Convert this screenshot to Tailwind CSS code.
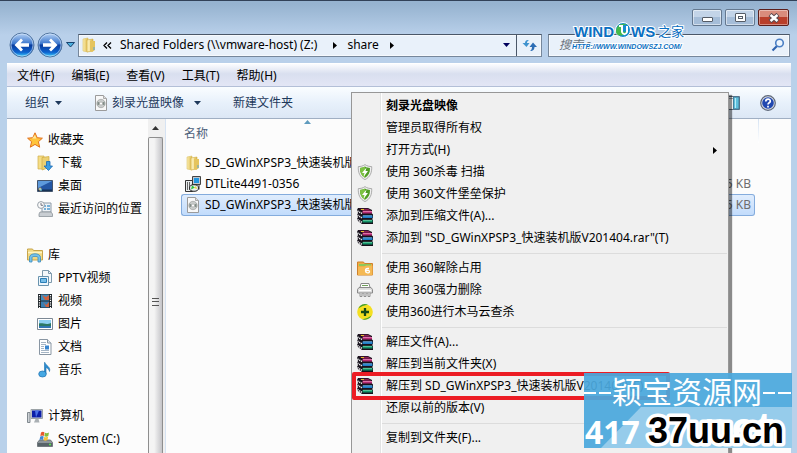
<!DOCTYPE html>
<html lang="zh-CN">
<head>
  <meta charset="UTF-8" />
  <meta name="viewport" content="width=device-width, initial-scale=1.0" />
  <title>share</title>
  <script src="https://cdn.jsdelivr.net/npm/@tailwindcss/browser@4"></script>
</head>

<body class="relative flex h-screen flex-col overflow-hidden border-t border-slate-700 bg-[#b9d1ea] font-['Noto_Sans','Noto_Sans_CJK_SC',sans-serif] text-xs text-black">

  <!-- Shared icons -->
  <svg class="absolute size-0">
    <defs>
      <linearGradient id="gold" x1="0" x2="1"><stop offset="0" stop-color="#fbeeb0" /><stop offset="1" stop-color="#dcb74a" /></linearGradient>
      <linearGradient id="orb" x1="0" y1="0" x2="0" y2="1"><stop offset="0" stop-color="#b9d4f5" /><stop offset=".45" stop-color="#3a76cd" /><stop offset=".5" stop-color="#0a3c9c" /><stop offset=".8" stop-color="#0d63cf" /><stop offset="1" stop-color="#3fd6ff" /></linearGradient>
    </defs>
    <symbol id="folder" viewBox="0 0 16 16">
      <path d="M2 2l5-1v14l-5-1z" fill="url(#gold)" stroke="#dcc268" stroke-width=".6" />
      <path d="M6 3l6-1v12l-6 1z" fill="url(#gold)" stroke="#d2ae48" stroke-width=".6" />
      <path d="M9 4l5 0v9l-3 2-2-1z" fill="#e5c45d" /><path d="M8 3v11" stroke="#fff6c9" /><path d="M13 10v3" stroke="#5aa5da" />
    </symbol>
    <symbol id="disc" viewBox="0 0 16 16">
      <path d="M2.500.5h8l3 3v12h-11z" fill="#f8f8f8" stroke="#9b9b9b" /><path d="M10.500.5v3h3" fill="#ddd" stroke="#aaa" />
      <circle cx="8" cy="8.500" r="4.200" fill="#c9cccb" stroke="#999" stroke-width=".6" /><path d="M8 8.500L4.500 6.500v4zM8 8.500l3.500-2v4z" fill="#7f8b85" /><circle cx="8" cy="8.500" r="1.500" fill="#fff" stroke="#999" stroke-width=".5" />
    </symbol>
    <symbol id="shield" viewBox="0 0 16 16">
      <path d="M8 .6c2 1.500 4.500 2 6.700 2 .3 6-1.500 10.500-6.700 13C2.800 13.100 1 8.600 1.300 2.600 3.500 2.600 6 2.100 8 .6z" fill="#eee" stroke="#9a9a9a" stroke-width=".8" />
      <path d="M8 2.500c1.600 1 3.200 1.400 5 1.500.1 4.600-1.400 7.800-5 9.800-3.600-2-5.100-5.200-5-9.800 1.800-.1 3.400-.5 5-1.500z" fill="#4f9d24" />
      <path d="M8 2.500v11.300c-3.600-2-5.100-5.200-5-9.800 1.800-.1 3.400-.5 5-1.500z" fill="#7cc242" /><path d="M9.500 3.500L5 9h2.500L6.500 13 11 7H8.500z" fill="#fff" />
    </symbol>
    <symbol id="rar" viewBox="0 0 16 16">
      <path d="M1 0h10l4 2v3.500l1 1V10l-1 1 1 1v4H5l-4-3-1-2 1-2-1-2 1-2-1-3z" fill="#15101a" />
      <path d="M2 .8h9l3.500 2H6z" fill="#8c1f57" /><path d="M5.500 3h9.500v2.500H5.500z" fill="#b32a72" /><path d="M6 3.500h9" stroke="#ee8fc0" stroke-width=".7" />
      <path d="M5.500 7.500h10v2.500h-10z" fill="#1d7cc5" /><path d="M6 7.800h9" stroke="#8bc6f0" stroke-width=".7" />
      <path d="M5.500 12h10v2.500h-10z" fill="#139468" /><path d="M6 12.300h9" stroke="#85e3b7" stroke-width=".7" />
      <path d="M.5 3l4.500 2.500M.5 7l4.500 3M.5 11.500l4.500 3" stroke="#f0f0f0" stroke-width="1.500" stroke-dasharray="1.200 .8" />
      <path d="M4 1.500h3" stroke="#e3be2c" />
    </symbol>
  </svg>

  <!-- Title bar and address row -->
  <header class="bg-linear-to-b from-[#96b3d0] from-5% to-[#b9d0ea] to-55% pb-[6px]">
    <div class="flex h-8 items-start justify-end gap-[3px] pt-2 pr-2">
      <button aria-label="最小化" class="flex h-[17px] w-[30px] items-center justify-center rounded-[2px] border border-[#64788f] bg-linear-to-b from-[#c3d4e8] from-50% to-[#a5bdd8] to-50% inset-ring inset-ring-white/50"><span class="mt-1 h-[5px] w-[11px] rounded-[1px] border border-[#555c66] bg-white"></span></button>
      <button aria-label="最大化" class="flex h-[17px] w-[30px] items-center justify-center rounded-[2px] border border-[#64788f] bg-linear-to-b from-[#c3d4e8] from-50% to-[#a5bdd8] to-50% inset-ring inset-ring-white/50"><span class="flex h-[9px] w-[11px] items-center justify-center rounded-[1px] border border-[#555c66] bg-white"><span class="h-[3px] w-[5px] border border-[#555c66]"></span></span></button>
      <button aria-label="关闭" class="flex h-[17px] w-[31px] items-center justify-center rounded-[2px] border border-[#5c1f1c] bg-linear-to-b from-[#d98c7c] from-50% to-[#b93f2b] to-50% inset-ring inset-ring-white/40">
        <svg class="h-[10px] w-3" viewBox="0 0 12 10"><path d="M2 1.500l8 7M10 1.500l-8 7" stroke="#5a4a50" stroke-width="4.500" /><path d="M2.500 2l7 6M9.500 2l-7 6" stroke="#fff" stroke-width="2.500" /></svg>
      </button>
    </div>
    <div class="flex h-6 items-center pr-[7px] pl-[9px]">
      <button aria-label="后退" class="shrink-0"><svg class="size-[26px]" viewBox="0 0 26 26"><circle cx="13" cy="13" r="12" fill="url(#orb)" stroke="#52759f" /><circle cx="13" cy="13" r="11" fill="none" stroke="#d5e8fb" stroke-opacity=".6" /><path d="M5.500 13l6.500-6.500 2 2-2.500 2.700h8.500v3.600h-8.500l2.500 2.700-2 2z" fill="#fff" /></svg></button>
      <button aria-label="前进" class="ml-[2px] shrink-0"><svg class="size-[26px]" viewBox="0 0 26 26"><circle cx="13" cy="13" r="12" fill="url(#orb)" stroke="#52759f" /><circle cx="13" cy="13" r="11" fill="none" stroke="#d5e8fb" stroke-opacity=".6" /><path d="M20.500 13l-6.500-6.500-2 2 2.500 2.700H6v3.600h8.500L12 17.500l2 2z" fill="#fff" /></svg></button>
      <button aria-label="最近浏览" class="ml-[3px] shrink-0"><svg class="h-[6px] w-[9px]" viewBox="0 0 9 6"><path d="M.5.500h8L4.500 5z" fill="#4cb1df" stroke="#17426f" /></svg></button>
      <nav class="ml-[3px] flex h-[23px] flex-1 items-center border border-[#76879b] border-t-[#4a5768] bg-[#e9f1fa] inset-ring inset-ring-white/60" aria-label="地址">
        <svg class="ml-[2px] size-4 shrink-0"><use href="#folder" /></svg>
        <svg class="ml-[6px] h-[7px] w-[9px]" viewBox="0 0 9 7" fill="none" stroke="#000" stroke-width="1.300"><path d="M4 .5l-3 3 3 3M8 .5l-3 3 3 3" /></svg>
        <a href="#" class="ml-2 whitespace-nowrap">Shared Folders (\\vmware-host) (Z:)</a>
        <svg class="ml-4 h-[7px] w-1" viewBox="0 0 4 7"><path d="M0 0l4 3.500L0 7z" /></svg>
        <a href="#" class="ml-[10px]">share</a>
        <svg class="ml-[11px] h-[7px] w-1" viewBox="0 0 4 7"><path d="M0 0l4 3.500L0 7z" /></svg>
        <button aria-label="以前的位置" class="ml-auto pr-[6px]"><svg class="h-1 w-[7px]" viewBox="0 0 7 4"><path d="M0 0h7L3.500 4z" fill="#00005c" /></svg></button>
        <button aria-label="刷新" class="flex h-full w-[25px] items-center justify-center border-l border-[#4a5768]"><svg class="h-3 w-[15px]" viewBox="0 0 15 12"><path d="M7 1C4 .5 3 2 3 4H.5L4.500 8l3-4H5c0-1 .5-2 2-3z" fill="#3f93ce" /><path d="M8 12c3 .3 4.500-1.500 4.500-4H15L11 3.500 7.500 8H10c0 1.500-.5 3-2 4z" fill="#2b6db5" /></svg></button>
      </nav>
      <label class="ml-[6px] flex h-[23px] w-[242px] items-center border border-[#76879b] border-t-[#4a5768] bg-[#e9f1fa] pr-1 pl-[10px] inset-ring inset-ring-white/60">
        <input type="text" aria-label="搜索 share" placeholder="搜索 s" class="w-full min-w-0 flex-1 italic outline-none placeholder:text-[#6c7580]" />
        <svg class="size-[14px] shrink-0" viewBox="0 0 14 14" fill="none"><path d="M6 8L1.500 12.500" stroke="#2e62ae" stroke-width="2.200" /><circle cx="8.500" cy="5" r="3.800" fill="#edf5fd" stroke="#4b7fc4" stroke-width="1.600" /></svg>
      </label>
    </div>
  </header>

  <div class="flex min-h-0 flex-1 flex-col pr-[6px] pl-[7px]">
    <!-- Menu bar -->
    <nav class="flex h-6 shrink-0 items-center gap-[17px] border-t border-b border-t-white border-b-[#b3bfd7] bg-linear-to-b from-[#fbfcfe] via-[#d9dfef] via-45% to-[#e3e6f5] pt-[2px] pl-[10px]">
      <button>文件(F)</button>
      <button>编辑(E)</button>
      <button>查看(V)</button>
      <button>工具(T)</button>
      <button>帮助(H)</button>
    </nav>

    <!-- Command bar -->
    <div class="flex h-8 shrink-0 items-center border-b border-[#a0afc3] bg-linear-to-b from-[#fafdff] via-[#e8f1fb] via-50% to-[#dce7f5] pr-[15px] pl-[18px] text-[#1e395b]">
      <button class="flex items-center gap-[6px]">组织 <svg class="h-1 w-[7px]" viewBox="0 0 7 4"><path d="M0 0h7L3.500 4z" fill="#1e395b" /></svg></button>
      <button class="ml-[31px] flex items-center"><svg class="size-4"><use href="#disc" /></svg><span class="ml-[3px]">刻录光盘映像</span><svg class="ml-[10px] h-1 w-[7px]" viewBox="0 0 7 4"><path d="M0 0h7L3.500 4z" fill="#1e395b" /></svg></button>
      <button class="ml-8">新建文件夹</button>
      <button aria-label="显示预览窗格" class="ml-auto"><svg class="h-[14px] w-[18px]" viewBox="0 0 18 14"><path d="M.5.500h17v13H.5z" fill="#fff" stroke="#5c6d80" /><path d="M1 2.500h10" stroke="#9aa7b5" /><path d="M11.500 1h5.500v12h-5.500z" fill="#5ebfdc" stroke="#447f9c" /><path d="M13.500 2v10" stroke="#b6ecf8" /></svg></button>
      <button aria-label="帮助" class="ml-5"><svg class="size-4" viewBox="0 0 16 16"><circle cx="8" cy="8" r="7.300" fill="#d9dde4" stroke="#5d6779" stroke-width="1.200" /><circle cx="8" cy="8" r="5.800" fill="#2148b0" /><path d="M5.800 6.500C5.800 3.500 10.300 3.500 10.300 6.200 10.300 7.700 8 7.800 8 9.500M8 10.700v1.700" fill="none" stroke="#fff" stroke-width="1.700" /></svg></button>
    </div>

    <div class="flex min-h-0 flex-1 bg-[#fcfcfc]">
      <!-- Navigation pane -->
      <aside class="w-[141px] shrink-0 pt-[9px] pl-5 whitespace-nowrap">
        <a href="#" class="flex h-[23px] items-center gap-[5px]"><svg class="size-4 shrink-0" viewBox="0 0 16 16"><path d="M8 .8l2.200 4.900 5.200.5-4 3.500 1.300 5.500L8 12.400l-4.700 2.800 1.300-5.500-4-3.500 5.200-.5z" fill="#ffc43b" stroke="#e2711d" /><path d="M8 3l1.300 3.500H5z" fill="#ffe89b" /></svg>收藏夹</a>
        <ul class="pl-[10px]">
          <li><a href="#" class="flex h-[23px] items-center gap-[5px]"><svg class="size-4 shrink-0" viewBox="0 0 16 16"><path d="M1 1h6v13H1z" fill="#f5dd85" stroke="#d0ad4a" stroke-width=".7" /><path d="M5 2.500l7-1v11l-7 2.500z" fill="#ecd072" stroke="#cfaa42" stroke-width=".7" /><path d="M9.500 6.500h3.500v4.500h2.500L11.500 15.500 7 11h2.500z" fill="#3d9de2" stroke="#196bb4" stroke-width=".8" /></svg>下载</a></li>
          <li><a href="#" class="flex h-[23px] items-center gap-[5px]"><svg class="size-4 shrink-0" viewBox="0 0 16 16"><path d="M.5 2.500h15v11H.5z" fill="#2457a4" stroke="#45566d" /><path d="M1 3h14L1 10z" fill="#5d9adc" /><path d="M1 11.500h14V13H1z" fill="#163256" /><circle cx="3" cy="11" r="1.500" fill="#f4a648" /><path d="M3 10v2h2" fill="none" stroke="#6fe3ff" /></svg>桌面</a></li>
          <li><a href="#" class="flex h-[23px] items-center gap-[5px]"><svg class="size-4 shrink-0" viewBox="0 0 16 16"><path d="M5 2h9v9H5z" fill="#eef2f6" stroke="#8d9aa7" /><path d="M7 5h2M7 8h2M10 5h3M10 8h3" stroke="#4f9bd0" stroke-width="1.500" /><path d="M3 11h11l1.500 2v2.500H2V13z" fill="#c9ced3" stroke="#8d949b" stroke-width=".8" /><circle cx="4" cy="4" r="3.400" fill="#fafafa" stroke="#98a0a8" /><path d="M4 2v2.300h2" fill="none" stroke="#556" stroke-width=".8" /></svg>最近访问的位置</a></li>
        </ul>
        <a href="#" class="mt-[23px] flex h-[23px] items-center gap-[5px]"><svg class="size-4 shrink-0" viewBox="0 0 16 16"><path d="M.5 3.500V2h5l1 1.500h9V13H.5z" fill="#f2d983" stroke="#c7a54b" /><path d="M1 5.500h14" stroke="#fff4c0" stroke-width="1.500" /><path d="M2.500 15V10.500c0-5 11-5 11 0V15h-2.500v-4.500c0-1.500-6-1.500-6 0V15z" fill="#77c3ea" stroke="#3a8cbe" stroke-width=".8" /></svg>库</a>
        <ul class="pl-[10px]">
          <li><a href="#" class="flex h-[23px] items-center gap-[5px]"><svg class="size-4 shrink-0" viewBox="0 0 16 16"><path d="M5.500.5h6l3 3v9h-9z" fill="#f4f8fb" stroke="#7f9aad" /><path d="M11.500.5v3h3" fill="none" stroke="#7f9aad" /><path d="M1.500 6.500h10v9h-10z" fill="#edf6fc" stroke="#6993ae" /><path d="M3.500 8.500h6v4h-6z" fill="#78bee8" stroke="#2b7eb6" /></svg>PPTV视频</a></li>
          <li><a href="#" class="flex h-[23px] items-center gap-[5px]"><svg class="size-4 shrink-0" viewBox="0 0 16 16"><path d="M1 1h14v14H1z" fill="#20272c" /><path d="M4 1.500h8v6H4z" fill="#418fc0" /><path d="M4 8.500h8v6H4z" fill="#3a80b4" /><path d="M5 2l4 2 3-2v5H8zM6 9l3 3 3-3v5H9z" fill="#ce6240" /><path d="M2.500 2v13M13.500 2v13" stroke="#fff" stroke-width="1.200" stroke-dasharray="1.200 1.200" /></svg>视频</a></li>
          <li><a href="#" class="flex h-[23px] items-center gap-[5px]"><svg class="size-4 shrink-0" viewBox="0 0 16 16"><path d="M.5 2.500h15v11H.5z" fill="#fff" stroke="#7c8894" /><path d="M2 4h12v8H2z" fill="#8dd0f1" /><path d="M2 7.500c4-1 7 2 12-.5V12H2z" fill="#2b7864" /><path d="M2 10h12v2H2z" fill="#3176b2" /></svg>图片</a></li>
          <li><a href="#" class="flex h-[23px] items-center gap-[5px]"><svg class="size-4 shrink-0" viewBox="0 0 16 16"><path d="M2.500.5h8l3.500 3.500v11.500h-11.500z" fill="#fff" stroke="#8996a3" /><path d="M10.500.5V4H14" fill="#dce6ef" stroke="#8996a3" /><path d="M4 3.500h5M4 5.500h5M4 7.500h3M4 9.500h3M4 11.500h8M4 13.500h8" stroke="#a5b5c5" /><path d="M8 6.500h4v4H8z" fill="#3a86ce" /></svg>文档</a></li>
          <li><a href="#" class="flex h-[23px] items-center gap-[5px]"><svg class="size-4 shrink-0" viewBox="0 0 16 16"><path d="M8 .5c.8 3.500 6 4 4.500 9-.6-2.500-2-3.500-3.500-4v6.500H7.500V.5z" fill="#2a8bd0" stroke="#1b70ad" stroke-width=".6" /><ellipse cx="5.500" cy="12" rx="3.800" ry="3" fill="#45a8e3" stroke="#1c6faf" stroke-width=".7" /></svg>音乐</a></li>
        </ul>
        <a href="#" class="mt-[23px] flex h-[23px] items-center gap-[5px]"><svg class="size-4 shrink-0" viewBox="0 0 16 16"><path d="M.5 4.500h2.500v10H.5z" fill="#cdd2d6" stroke="#81898f" /><path d="M4 1.500h11.500v9H4z" fill="#d9dddf" stroke="#9ba2a6" /><path d="M5 2.500h9.500v7H5z" fill="#0c1fa8" /><path d="M8 2.500h4L9 9.500z" fill="#4b72e8" /><path d="M8.500 11h3l1 3.500H7z" fill="#aab0b4" /></svg>计算机</a>
        <ul class="pl-[10px]">
          <li><a href="#" class="flex h-[23px] items-center gap-[5px]"><svg class="size-4 shrink-0" viewBox="0 0 16 16"><path d="M2.500 9h11l2 2.500v4H.5v-4z" fill="#8e969b" stroke="#5d6569" stroke-width=".8" /><path d="M1 12h14v3H1z" fill="#596469" /><path d="M12 13.500h2" stroke="#58e84c" stroke-width="1.500" /><path d="M4 1.500c1.500-1 2.500-.8 3.500 0L6.800 5c-1-.8-2-.8-3.500 0z" fill="#e8582d" /><path d="M8 1.800c1 .7 2.500.7 4-.3l-.7 3.500c-1.500 1-2.800.8-4 .2z" fill="#84bd3c" /><path d="M3.200 5.600c1.500-.8 2.500-.8 3.500 0L6 9c-1-.7-2-.7-3.500 0z" fill="#3f86d5" /><path d="M7.200 5.900c1.200.6 2.500.6 4-.3l-.7 3.500c-1.500 1-2.800.8-4 .2z" fill="#f5c33a" /></svg>System (C:)</a></li>
        </ul>
      </aside>

      <!-- Scrollbar -->
      <div class="flex w-[18px] shrink-0 flex-col border-r border-[#d6e3f3] bg-[#f0f0f0] pr-[2px]" aria-hidden="true">
        <div class="flex h-[18px] shrink-0 items-center justify-center"><svg class="h-1 w-[7px]" viewBox="0 0 7 4"><path d="M0 4h7L3.500 0z" fill="#333" /></svg></div>
        <div class="flex flex-1 flex-col items-center rounded-t-[2px] border border-b-0 border-[#8e8e8e] bg-linear-to-r from-[#f4f4f4] from-40% to-[#c4c4c8] pt-40">
          <span class="flex h-2 w-[7px] flex-col justify-between border-y border-[#555]"><i class="mt-[2px] h-px bg-[#555]"></i></span>
        </div>
      </div>

      <!-- File list -->
      <main class="flex min-w-0 flex-1 items-start pl-[15px]">
        <table class="flex-1 table-fixed border-separate border-spacing-0 whitespace-nowrap">
          <thead>
            <tr class="h-[33px] text-left text-[#4c607a]">
              <th class="pb-1 pl-[3px] font-normal"><span class="flex items-center">名称<svg class="mb-6 ml-24 h-1 w-[7px]" viewBox="0 0 7 4"><path d="M0 4h7L3.500 0z" fill="#5f9bbd" /></svg></span></th>
              <th class="w-[500px]" aria-label="大小"></th>
            </tr>
          </thead>
          <tbody>
            <tr class="h-[21px]">
              <td class="py-0 pl-1"><span class="flex h-5 items-center gap-1"><svg class="size-4 shrink-0"><use href="#folder" /></svg>SD_GWinXPSP3_快速装机版V201404</span></td>
              <td></td>
            </tr>
            <tr class="h-[21px]">
              <td class="py-0 pl-1"><span class="flex h-5 items-center gap-1"><svg class="size-4 shrink-0" viewBox="0 0 16 16"><path d="M7.500.5h8v8h-8z" fill="#bcc5ce" stroke="#444" /><path d="M9 2h5v5H9z" fill="#2196df" /><path d="M.5 4.500h7v11h-7z" fill="#e7eaec" stroke="#333" /><path d="M2.500 6v8M4.500 6v8" stroke="#666" /><ellipse cx="9" cy="12" rx="4.500" ry="3.300" fill="#e8eff0" stroke="#222" /><path d="M7 9.500l3 2-4 2z" fill="#2cc13e" /><path d="M11 10l1 3-3-1z" fill="#e8d43a" /><path d="M14 8.500v5" stroke="#333" /></svg>DTLite4491-0356</span></td>
              <td class="pr-1 text-right text-[#6d6d6d]">5 KB</td>
            </tr>
            <tr class="h-[22px]">
              <td class="rounded-l-[3px] border border-r-0 border-[#84acdd] bg-linear-to-b from-[#e0edfd] to-[#c2dcfc] py-0 pl-[3px]"><span class="flex h-5 items-center gap-1"><svg class="size-4 shrink-0"><use href="#disc" /></svg>SD_GWinXPSP3_快速装机版V201404</span></td>
              <td class="rounded-r-[3px] border border-l-0 border-[#84acdd] bg-linear-to-b from-[#e0edfd] to-[#c2dcfc] py-0 pr-[3px] text-right text-[#6d6d6d]">5 KB</td>
            </tr>
          </tbody>
        </table>
        <div class="mr-8 ml-[3px] h-6 w-px shrink-0 bg-linear-to-t from-white to-[#d5e3f3]"></div>
      </main>
    </div>
  </div>

  <!-- Context menu -->
  <div role="menu" class="absolute top-[91px] left-[351px] w-[378px] border border-[#979797] bg-[#f0f0f0] pt-[2px] pb-6 whitespace-nowrap shadow-[3px_3px_1px_rgba(0,0,0,0.45)]">
    <div class="absolute inset-y-0 left-[28px] w-[2px] border-l border-[#e2e3e3] bg-white"></div>
    <button role="menuitem" class="relative flex h-[22px] w-full items-center pl-[34px] font-bold">刻录光盘映像</button>
    <button role="menuitem" class="relative flex h-[22px] w-full items-center pl-[34px]">管理员取得所有权</button>
    <button role="menuitem" class="relative flex h-[22px] w-full items-center justify-between pr-[11px] pl-[34px]">打开方式(H) <svg class="h-[7px] w-1" viewBox="0 0 4 7"><path d="M0 0l4 3.500L0 7z" /></svg></button>
    <button role="menuitem" class="relative flex h-[22px] w-full items-center gap-[13px] pl-[5px]"><svg class="size-4"><use href="#shield" /></svg>使用 360杀毒 扫描</button>
    <button role="menuitem" class="relative flex h-[22px] w-full items-center gap-[13px] pl-[5px]"><svg class="size-4"><use href="#shield" /></svg>使用 360文件堡垒保护</button>
    <button role="menuitem" class="relative flex h-[22px] w-full items-center gap-[13px] pl-[5px]"><svg class="size-4"><use href="#rar" /></svg>添加到压缩文件(A)...</button>
    <button role="menuitem" class="relative flex h-[22px] w-full items-center gap-[13px] pl-[5px]"><svg class="size-4"><use href="#rar" /></svg>添加到 "SD_GWinXPSP3_快速装机版V201404.rar"(T)</button>
    <hr class="mt-1 mr-px mb-[3px] ml-[29px] border-[#dcdcdc]" />
    <button role="menuitem" class="relative flex h-[22px] w-full items-center gap-[13px] pl-[5px]"><svg class="size-4" viewBox="0 0 16 16"><path d="M.5 2h6l1 1.500h8V15H.5z" fill="#f0ad45" stroke="#cf812a" /><path d="M2 5h12" stroke="#8cc95b" stroke-width="2" /><path d="M1 7h6l2-1.500h6.500V15H1z" fill="#f5b954" /><path d="M12 8.500h-1.500c-1.500 0-2 1.300-2 2.500 0 2.500 4 2.500 4 .5 0-1.500-2.500-1.500-3.500-.3" fill="none" stroke="#fff" stroke-width="1.300" /></svg>使用 360解除占用</button>
    <button role="menuitem" class="relative flex h-[22px] w-full items-center gap-[13px] pl-[5px]"><svg class="size-4" viewBox="0 0 16 16"><path d="M4 1.500h8l1 4H3z" fill="#fff" stroke="#888" /><path d="M5 3.500h6" stroke="#70a05a" /><path d="M2 5.500h12l1.500 2v3.500H.5V7.500z" fill="#dcdcdc" stroke="#8a8a8a" /><path d="M2 8.500h12" stroke="#fff" stroke-width="1.300" /><path d="M3 11v3.500h2V11M7 11v3.500h2V11M11 11v3.500h2V11" fill="#eee" stroke="#909090" /></svg>使用 360强力删除</button>
    <button role="menuitem" class="relative flex h-[22px] w-full items-center gap-[13px] pl-[5px]"><svg class="size-4" viewBox="0 0 16 16"><circle cx="8" cy="8" r="7.800" fill="#f4df21" /><path d="M3 2A7.800 7.800 0 0 1 11 .8C7 1 4 3 1.200 4.500zM14.500 11.500A7.800 7.800 0 0 1 5 15.200c4-.2 7-2 9.500-3.700z" fill="#3d9f2c" /><path d="M8 4v8M4 8h8" stroke="#144a16" stroke-width="2.300" /></svg>使用360进行木马云查杀</button>
    <hr class="mt-1 mr-px mb-[3px] ml-[29px] border-[#dcdcdc]" />
    <button role="menuitem" class="relative flex h-[22px] w-full items-center gap-[13px] pl-[5px]"><svg class="size-4"><use href="#rar" /></svg>解压文件(A)...</button>
    <button role="menuitem" class="relative flex h-[22px] w-full items-center gap-[13px] pl-[5px]"><svg class="size-4"><use href="#rar" /></svg>解压到当前文件夹(X)</button>
    <div class="relative">
      <button role="menuitem" class="relative flex h-[22px] w-full items-center gap-[13px] pl-[5px]"><svg class="size-4"><use href="#rar" /></svg>解压到 SD_GWinXPSP3_快速装机版V201404\(E)</button>
      <!-- Highlight frame -->
      <div class="pointer-events-none absolute -inset-y-[3px] left-0 w-[318px] rounded-[2px] border-4 border-[#ec1c24]"></div>
    </div>
    <button role="menuitem" class="relative flex h-[22px] w-full items-center pl-[34px]">还原以前的版本(V)</button>
    <hr class="mt-1 mr-px mb-[3px] ml-[29px] border-[#dcdcdc]" />
    <button role="menuitem" class="relative flex h-[22px] w-full items-center pl-[34px]">复制到文件夹(F)...</button>
  </div>

  <!-- Site logo over the search box -->
  <svg class="absolute top-[20px] right-[104px] h-8 w-[122px]" viewBox="0 0 122 32" role="img" aria-label="Windows之家">
    <g fill="#0a6fc2" stroke="#fff" stroke-width="2" paint-order="stroke" font-family="Liberation Sans, Noto Sans CJK SC, sans-serif" font-weight="bold">
      <text x="3" y="16" font-size="15">WIND</text>
      <text x="60" y="16" font-size="15">WS</text>
      <text x="87" y="15" font-size="13" font-weight="normal">之家</text>
      <text x="1" y="28" font-size="7" font-style="italic">HTTP://WWW.WINDOWSZJ.COM/</text>
    </g>
    <circle cx="52" cy="9" r="7.500" fill="#158bd0" stroke="#fff" />
    <path d="M45 11c0-8 7-10 12-7-5-1-7 2-6 5s4 2 5 0c-1 6-10 8-11 2z" fill="#44b94b" />
    <path d="M48 5l3 0v6c1 3 4 3 5 0V5" fill="none" stroke="#fff" stroke-width="2" />
  </svg>

  <!-- Site banner -->
  <svg class="absolute right-[5px] bottom-[5px] h-[75px] w-[208px]" viewBox="0 0 208 75" role="img" aria-label="颖宝资源网 37uu.cn">
    <path d="M0 0h208v75H0z" fill="#4aa8dd" fill-opacity=".93" />
    <path d="M57 34h151v41H17z" fill="#96cceb" />
    <path d="M0 20h12M15 20h12M179 20h12M194 20h13" stroke="#fff" stroke-width="2" />
    <text x="28" y="30" font-size="30" fill="#fff" font-family="Noto Sans CJK SC, sans-serif">颖宝资源网</text>
    <g font-family="Noto Sans, sans-serif" font-weight="bold" fill="#fff">
      <text x="1" y="71" font-size="32">417</text>
      <text x="108" y="69" font-size="42">.net</text>
    </g>
    <text x="64" y="70" font-size="36" font-family="Liberation Sans, sans-serif" font-weight="bold" stroke="#fff" stroke-width="7" stroke-linejoin="round" paint-order="stroke">37uu.cn</text>
  </svg>
</body>
</html>
